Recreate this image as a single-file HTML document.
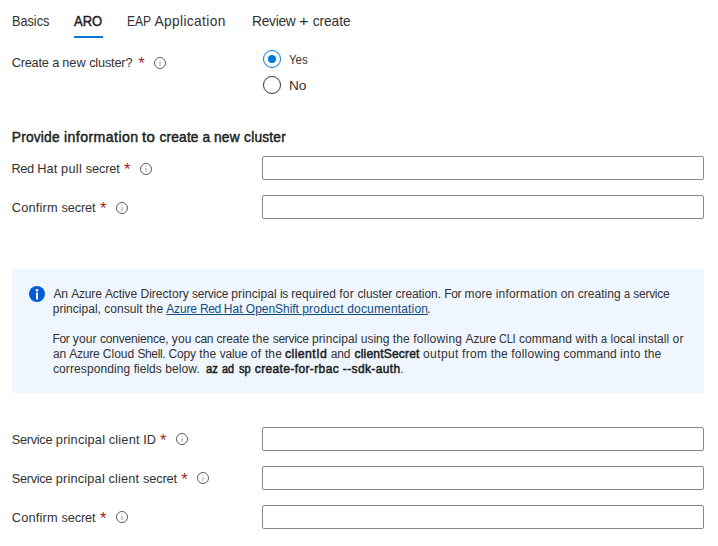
<!DOCTYPE html>
<html lang="en">
<head>
<meta charset="utf-8">
<title>Create cluster</title>
<style>
html,body{margin:0;padding:0;background:#fff;}
body{width:718px;height:546px;position:relative;overflow:hidden;font-family:"Liberation Sans",sans-serif;color:#323130;font-size:12.75px;}
.t{position:absolute;white-space:pre;line-height:18px;height:18px;transform-origin:0 50%;}
.tab{color:#323130;}
.tab.sel{font-weight:normal;-webkit-text-stroke:0.45px #201f1e;color:#201f1e;}
.hd{font-weight:normal;-webkit-text-stroke:0.45px #201f1e;color:#201f1e;}
.ul{position:absolute;left:74px;top:36px;width:29px;height:2px;background:#0078d4;}
.req{color:#a4262c;font-size:16.5px;}
.inp{position:absolute;left:262px;width:440px;height:22px;border:1px solid #8a8886;border-radius:2px;background:#fff;}
.info{position:absolute;left:12px;top:269px;width:692px;height:124px;background:#f0f6ff;border-radius:2px;}
.ic{position:absolute;width:12px;height:12px;}
.radio{position:absolute;width:16px;height:16px;border-radius:50%;border:1px solid #323130;background:#fff;}
.radio.on{border-color:#0078d4;}
.radio.on::after{content:"";position:absolute;left:3.8px;top:3.8px;width:8.4px;height:8.4px;border-radius:50%;background:#0078d4;}
a{color:#0f4c81;text-decoration:underline;text-underline-offset:1px;text-decoration-thickness:1px;}
b{font-weight:normal;-webkit-text-stroke:0.5px #201f1e;color:#201f1e;}
</style>
</head>
<body>
<div class="ul"></div>
<div class="info"></div>
<svg style="position:absolute;left:29px;top:286px;width:16px;height:16px;" viewBox="0 0 16 16"><circle cx="8" cy="8" r="8" fill="#015cda"/><rect x="7" y="6.5" width="2" height="7" fill="#fff"/><circle cx="8" cy="4.3" r="1.3" fill="#fff"/></svg>
<div class="radio on" style="left:263px;top:50px;"></div>
<div class="radio" style="left:263px;top:76px;"></div>
<div class="inp" style="top:156px;"></div>
<div class="inp" style="top:195px;"></div>
<div class="inp" style="top:427px;"></div>
<div class="inp" style="top:466px;"></div>
<div class="inp" style="top:505px;"></div>
<svg class="ic" style="left:153.8px;top:57px;" viewBox="0 0 12 12"><circle cx="6" cy="6" r="5.5" fill="none" stroke="#605e5c" stroke-width="1"/><rect x="5.5" y="5" width="1" height="4" fill="#605e5c" fill-opacity="0.6"/><rect x="5.5" y="3" width="1" height="1" fill="#605e5c" fill-opacity="0.5"/></svg>
<svg class="ic" style="left:139.7px;top:163px;" viewBox="0 0 12 12"><circle cx="6" cy="6" r="5.5" fill="none" stroke="#605e5c" stroke-width="1"/><rect x="5.5" y="5" width="1" height="4" fill="#605e5c" fill-opacity="0.6"/><rect x="5.5" y="3" width="1" height="1" fill="#605e5c" fill-opacity="0.5"/></svg>
<svg class="ic" style="left:116.1px;top:202px;" viewBox="0 0 12 12"><circle cx="6" cy="6" r="5.5" fill="none" stroke="#605e5c" stroke-width="1"/><rect x="5.5" y="5" width="1" height="4" fill="#605e5c" fill-opacity="0.6"/><rect x="5.5" y="3" width="1" height="1" fill="#605e5c" fill-opacity="0.5"/></svg>
<svg class="ic" style="left:176px;top:433px;" viewBox="0 0 12 12"><circle cx="6" cy="6" r="5.5" fill="none" stroke="#605e5c" stroke-width="1"/><rect x="5.5" y="5" width="1" height="4" fill="#605e5c" fill-opacity="0.6"/><rect x="5.5" y="3" width="1" height="1" fill="#605e5c" fill-opacity="0.5"/></svg>
<svg class="ic" style="left:197.1px;top:472px;" viewBox="0 0 12 12"><circle cx="6" cy="6" r="5.5" fill="none" stroke="#605e5c" stroke-width="1"/><rect x="5.5" y="5" width="1" height="4" fill="#605e5c" fill-opacity="0.6"/><rect x="5.5" y="3" width="1" height="1" fill="#605e5c" fill-opacity="0.5"/></svg>
<svg class="ic" style="left:116.1px;top:511px;" viewBox="0 0 12 12"><circle cx="6" cy="6" r="5.5" fill="none" stroke="#605e5c" stroke-width="1"/><rect x="5.5" y="5" width="1" height="4" fill="#605e5c" fill-opacity="0.6"/><rect x="5.5" y="3" width="1" height="1" fill="#605e5c" fill-opacity="0.5"/></svg>
<div class="t req" style="left:138.30px;top:54px;">*</div>
<div class="t req" style="left:124.10px;top:160px;">*</div>
<div class="t req" style="left:99.90px;top:199px;">*</div>
<div class="t req" style="left:159.90px;top:431px;">*</div>
<div class="t req" style="left:181.20px;top:470px;">*</div>
<div class="t req" style="left:99.90px;top:509px;">*</div>
<div class="t tab" id="tab1" style="left:12.00px;top:13px;font-size:13.75px;transform:scaleX(0.9230);">Basics</div>
<div class="t tab sel" id="tab2" style="left:74.00px;top:13px;font-size:13.75px;transform:scaleX(0.9480);">ARO</div>
<div class="t tab" id="tb3_0" style="left:127.00px;top:13px;font-size:13.75px;transform:scaleX(0.8730);">EAP</div>
<div class="t tab" id="tb3_1" style="left:154.43px;top:13px;font-size:13.75px;letter-spacing:0.365px;">Application</div>
<div class="t tab" id="tb4_0" style="left:252.10px;top:13px;font-size:13.75px;letter-spacing:-0.300px;">Review</div>
<div class="t tab" id="tb4_1" style="left:299.00px;top:13px;font-size:13.75px;transform:scaleX(1.1937);">+</div>
<div class="t tab" id="tb4_2" style="left:312.66px;top:13px;font-size:13.75px;letter-spacing:-0.055px;">create</div>
<div class="t" id="l1_0" style="left:11.76px;top:54px;font-size:12.75px;letter-spacing:-0.233px;">Create</div>
<div class="t" id="l1_1" style="left:52.17px;top:54px;font-size:12.75px;">a</div>
<div class="t" id="l1_2" style="left:62.26px;top:54px;font-size:12.75px;letter-spacing:-0.012px;">new</div>
<div class="t" id="l1_3" style="left:89.15px;top:54px;font-size:12.75px;letter-spacing:-0.182px;">cluster?</div>
<div class="t" id="r1" style="left:289.00px;top:51px;font-size:12.75px;transform:scaleX(0.8950);">Yes</div>
<div class="t" id="r2" style="left:289.00px;top:77px;font-size:12.75px;transform:scaleX(1.0700);">No</div>
<div class="t hd" id="h1_0" style="left:11.75px;top:129px;font-size:13.75px;letter-spacing:0.206px;">Provide</div>
<div class="t hd" id="h1_1" style="left:64.00px;top:129px;font-size:13.75px;letter-spacing:0.400px;transform:scaleX(1.0286);">information</div>
<div class="t hd" id="h1_2" style="left:142.00px;top:129px;font-size:13.75px;letter-spacing:0.400px;transform:scaleX(1.0894);">to</div>
<div class="t hd" id="h1_3" style="left:159.57px;top:129px;font-size:13.75px;letter-spacing:0.142px;">create</div>
<div class="t hd" id="h1_4" style="left:202.60px;top:129px;font-size:13.75px;">a</div>
<div class="t hd" id="h1_5" style="left:213.91px;top:129px;font-size:13.75px;letter-spacing:0.315px;">new</div>
<div class="t hd" id="h1_6" style="left:244.05px;top:129px;font-size:13.75px;letter-spacing:0.207px;">cluster</div>
<div class="t" id="l2_0" style="left:11.50px;top:160px;font-size:12.75px;letter-spacing:-0.406px;">Red</div>
<div class="t" id="l2_1" style="left:37.23px;top:160px;font-size:12.75px;letter-spacing:0.116px;">Hat</div>
<div class="t" id="l2_2" style="left:60.97px;top:160px;font-size:12.75px;letter-spacing:0.343px;">pull</div>
<div class="t" id="l2_3" style="left:85.75px;top:160px;font-size:12.75px;letter-spacing:-0.131px;">secret</div>
<div class="t" id="l3_0" style="left:11.75px;top:199px;font-size:12.75px;letter-spacing:0.204px;">Confirm</div>
<div class="t" id="l3_1" style="left:61.39px;top:199px;font-size:12.75px;letter-spacing:-0.098px;">secret</div>
<div class="t p" id="p1_0" style="left:53.45px;top:285px;font-size:12px;letter-spacing:-0.088px;">An</div>
<div class="t p" id="p1_1" style="left:71.25px;top:285px;font-size:12px;letter-spacing:-0.196px;">Azure</div>
<div class="t p" id="p1_2" style="left:104.91px;top:285px;font-size:12px;letter-spacing:-0.072px;">Active</div>
<div class="t p" id="p1_3" style="left:140.45px;top:285px;font-size:12px;letter-spacing:0.034px;">Directory</div>
<div class="t p" id="p1_4" style="left:192.05px;top:285px;font-size:12px;letter-spacing:-0.291px;">service</div>
<div class="t p" id="p1_5" style="left:231.32px;top:285px;font-size:12px;letter-spacing:0.076px;">principal</div>
<div class="t p" id="p1_6" style="left:279.99px;top:285px;font-size:12px;letter-spacing:-0.343px;">is</div>
<div class="t p" id="p1_7" style="left:291.26px;top:285px;font-size:12px;letter-spacing:0.079px;">required</div>
<div class="t p" id="p1_8" style="left:339.21px;top:285px;font-size:12px;letter-spacing:0.308px;">for</div>
<div class="t p" id="p1_9" style="left:357.43px;top:285px;font-size:12px;letter-spacing:-0.077px;">cluster</div>
<div class="t p" id="p1_10" style="left:395.52px;top:285px;font-size:12px;letter-spacing:-0.065px;">creation.</div>
<div class="t p" id="p1_11" style="left:444.25px;top:285px;font-size:12px;letter-spacing:-0.321px;">For</div>
<div class="t p" id="p1_12" style="left:464.57px;top:285px;font-size:12px;letter-spacing:0.109px;">more</div>
<div class="t p" id="p1_13" style="left:495.63px;top:285px;font-size:12px;letter-spacing:0.221px;">information</div>
<div class="t p" id="p1_14" style="left:560.72px;top:285px;font-size:12px;letter-spacing:0.222px;">on</div>
<div class="t p" id="p1_15" style="left:577.81px;top:285px;font-size:12px;letter-spacing:0.022px;">creating</div>
<div class="t p" id="p1_16" style="left:624.00px;top:285px;font-size:12px;transform:scaleX(0.9122);">a</div>
<div class="t p" id="p1_17" style="left:633.36px;top:285px;font-size:12px;letter-spacing:-0.291px;">service</div>
<div class="t p" id="p2_0" style="left:52.70px;top:300px;font-size:12px;letter-spacing:0.026px;">principal,</div>
<div class="t p" id="p2_1" style="left:104.30px;top:300px;font-size:12px;letter-spacing:0.055px;">consult</div>
<div class="t p" id="p2_2" style="left:146.02px;top:300px;font-size:12px;letter-spacing:0.180px;">the</div>
<div class="t p" id="p2l_0" style="left:166.28px;top:300px;font-size:12px;letter-spacing:-0.161px;"><a>Azure </a></div>
<div class="t p" id="p2l_1" style="left:200.00px;top:300px;font-size:12px;letter-spacing:-0.381px;"><a>Red </a></div>
<div class="t p" id="p2l_2" style="left:223.84px;top:300px;font-size:12px;letter-spacing:-0.004px;"><a>Hat </a></div>
<div class="t p" id="p2l_3" style="left:245.84px;top:300px;font-size:12px;letter-spacing:-0.031px;"><a>OpenShift </a></div>
<div class="t p" id="p2l_4" style="left:302.23px;top:300px;font-size:12px;letter-spacing:0.210px;"><a>product </a></div>
<div class="t p" id="p2l_5" style="left:347.27px;top:300px;font-size:12px;letter-spacing:0.163px;"><a>documentation</a></div>
<div class="t p" id="p2c" style="left:427.25px;top:300px;font-size:12px;">.</div>
<div class="t p" id="p3_0" style="left:52.45px;top:330px;font-size:12px;letter-spacing:-0.311px;">For</div>
<div class="t p" id="p3_1" style="left:72.81px;top:330px;font-size:12px;letter-spacing:0.113px;">your</div>
<div class="t p" id="p3_2" style="left:99.89px;top:330px;font-size:12px;letter-spacing:-0.173px;">convenience,</div>
<div class="t p" id="p3_3" style="left:171.83px;top:330px;font-size:12px;letter-spacing:0.089px;">you</div>
<div class="t p" id="p3_4" style="left:194.74px;top:330px;font-size:12px;letter-spacing:-0.302px;">can</div>
<div class="t p" id="p3_5" style="left:216.49px;top:330px;font-size:12px;letter-spacing:-0.147px;">create</div>
<div class="t p" id="p3_6" style="left:252.25px;top:330px;font-size:12px;letter-spacing:0.154px;">the</div>
<div class="t p" id="p3_7" style="left:272.70px;top:330px;font-size:12px;letter-spacing:-0.281px;">service</div>
<div class="t p" id="p3_8" style="left:312.04px;top:330px;font-size:12px;letter-spacing:0.086px;">principal</div>
<div class="t p" id="p3_9" style="left:360.80px;top:330px;font-size:12px;letter-spacing:-0.007px;">using</div>
<div class="t p" id="p3_10" style="left:392.74px;top:330px;font-size:12px;letter-spacing:0.154px;">the</div>
<div class="t p" id="p3_11" style="left:413.18px;top:330px;font-size:12px;letter-spacing:0.267px;">following</div>
<div class="t p" id="p3_12" style="left:465.58px;top:330px;font-size:12px;letter-spacing:-0.185px;">Azure</div>
<div class="t p" id="p3_13" style="left:499.00px;top:330px;font-size:12px;letter-spacing:-0.300px;transform:scaleX(0.9157);">CLI</div>
<div class="t p" id="p3_14" style="left:518.89px;top:330px;font-size:12px;letter-spacing:0.077px;">command</div>
<div class="t p" id="p3_15" style="left:575.40px;top:330px;font-size:12px;letter-spacing:0.277px;">with</div>
<div class="t p" id="p3_16" style="left:601.00px;top:330px;font-size:12px;transform:scaleX(0.9139);">a</div>
<div class="t p" id="p3_17" style="left:610.55px;top:330px;font-size:12px;letter-spacing:-0.034px;">local</div>
<div class="t p" id="p3_18" style="left:638.36px;top:330px;font-size:12px;letter-spacing:0.015px;">install</div>
<div class="t p" id="p3_19" style="left:672.44px;top:330px;font-size:12px;letter-spacing:0.268px;">or</div>
<div class="t p" id="p4_0" style="left:52.95px;top:345px;font-size:12px;letter-spacing:-0.227px;">an</div>
<div class="t p" id="p4_1" style="left:69.14px;top:345px;font-size:12px;letter-spacing:-0.184px;">Azure</div>
<div class="t p" id="p4_2" style="left:102.87px;top:345px;font-size:12px;letter-spacing:-0.022px;">Cloud</div>
<div class="t p" id="p4_3" style="left:137.41px;top:345px;font-size:12px;letter-spacing:-0.358px;">Shell.</div>
<div class="t p" id="p4_4" style="left:168.59px;top:345px;font-size:12px;letter-spacing:-0.170px;">Copy</div>
<div class="t p" id="p4_5" style="left:199.21px;top:345px;font-size:12px;letter-spacing:0.155px;">the</div>
<div class="t p" id="p4_6" style="left:219.66px;top:345px;font-size:12px;letter-spacing:-0.166px;">value</div>
<div class="t p" id="p4_7" style="left:250.80px;top:345px;font-size:12px;letter-spacing:0.392px;">of</div>
<div class="t p" id="p4_8" style="left:264.89px;top:345px;font-size:12px;letter-spacing:0.155px;">the</div>
<div class="t p" id="p4b" style="left:285.00px;top:345px;font-size:12px;letter-spacing:0.400px;transform:scaleX(1.0236);"><b>clientId</b></div>
<div class="t p" id="p4c" style="left:330.75px;top:345px;font-size:12px;letter-spacing:-0.125px;">and</div>
<div class="t p" id="p4d" style="left:354.50px;top:345px;font-size:12px;letter-spacing:0.205px;"><b>clientSecret</b></div>
<div class="t p" id="p4e_0" style="left:423.00px;top:345px;font-size:12px;letter-spacing:0.409px;">output</div>
<div class="t p" id="p4e_1" style="left:462.12px;top:345px;font-size:12px;letter-spacing:0.326px;">from</div>
<div class="t p" id="p4e_2" style="left:490.71px;top:345px;font-size:12px;letter-spacing:0.154px;">the</div>
<div class="t p" id="p4e_3" style="left:511.15px;top:345px;font-size:12px;letter-spacing:0.267px;">following</div>
<div class="t p" id="p4e_4" style="left:563.55px;top:345px;font-size:12px;letter-spacing:0.077px;">command</div>
<div class="t p" id="p4e_5" style="left:620.07px;top:345px;font-size:12px;letter-spacing:0.363px;">into</div>
<div class="t p" id="p4e_6" style="left:644.17px;top:345px;font-size:12px;letter-spacing:0.154px;">the</div>
<div class="t p" id="p5_0" style="left:52.95px;top:360px;font-size:12px;letter-spacing:0.104px;">corresponding</div>
<div class="t p" id="p5_1" style="left:133.66px;top:360px;font-size:12px;letter-spacing:0.024px;">fields</div>
<div class="t p" id="p5_2" style="left:165.13px;top:360px;font-size:12px;letter-spacing:0.120px;">below.</div>
<div class="t p" id="p5b1a" style="left:206.00px;top:360px;font-size:12px;transform:scaleX(0.9390);"><b>az</b></div>
<div class="t p" id="p5b1b" style="left:222.00px;top:360px;font-size:12px;transform:scaleX(0.9022);"><b>ad</b></div>
<div class="t p" id="p5b1c" style="left:239.00px;top:360px;font-size:12px;transform:scaleX(0.9200);"><b>sp</b></div>
<div class="t p" id="p5b2" style="left:254.75px;top:360px;font-size:12px;letter-spacing:0.375px;"><b>create-for-rbac</b></div>
<div class="t p" id="p5b3" style="left:342.75px;top:360px;font-size:12px;letter-spacing:0.389px;"><b>--sdk-auth</b></div>
<div class="t p" id="p5c" style="left:400.25px;top:360px;font-size:12px;">.</div>
<div class="t" id="l4_0" style="left:11.75px;top:431px;font-size:12.75px;letter-spacing:-0.287px;">Service</div>
<div class="t" id="l4_1" style="left:55.83px;top:431px;font-size:12.75px;letter-spacing:0.206px;">principal</div>
<div class="t" id="l4_2" style="left:108.73px;top:431px;font-size:12.75px;letter-spacing:0.195px;">client</div>
<div class="t" id="l4_3" style="left:143.24px;top:431px;font-size:12.75px;letter-spacing:-0.072px;">ID</div>
<div class="t" id="l5_0" style="left:11.75px;top:470px;font-size:12.75px;letter-spacing:-0.301px;">Service</div>
<div class="t" id="l5_1" style="left:55.72px;top:470px;font-size:12.75px;letter-spacing:0.192px;">principal</div>
<div class="t" id="l5_2" style="left:108.49px;top:470px;font-size:12.75px;letter-spacing:0.183px;">client</div>
<div class="t" id="l5_3" style="left:142.92px;top:470px;font-size:12.75px;letter-spacing:-0.115px;">secret</div>
<div class="t" id="l6_0" style="left:11.75px;top:509px;font-size:12.75px;letter-spacing:0.204px;">Confirm</div>
<div class="t" id="l6_1" style="left:61.39px;top:509px;font-size:12.75px;letter-spacing:-0.098px;">secret</div>
</body>
</html>
